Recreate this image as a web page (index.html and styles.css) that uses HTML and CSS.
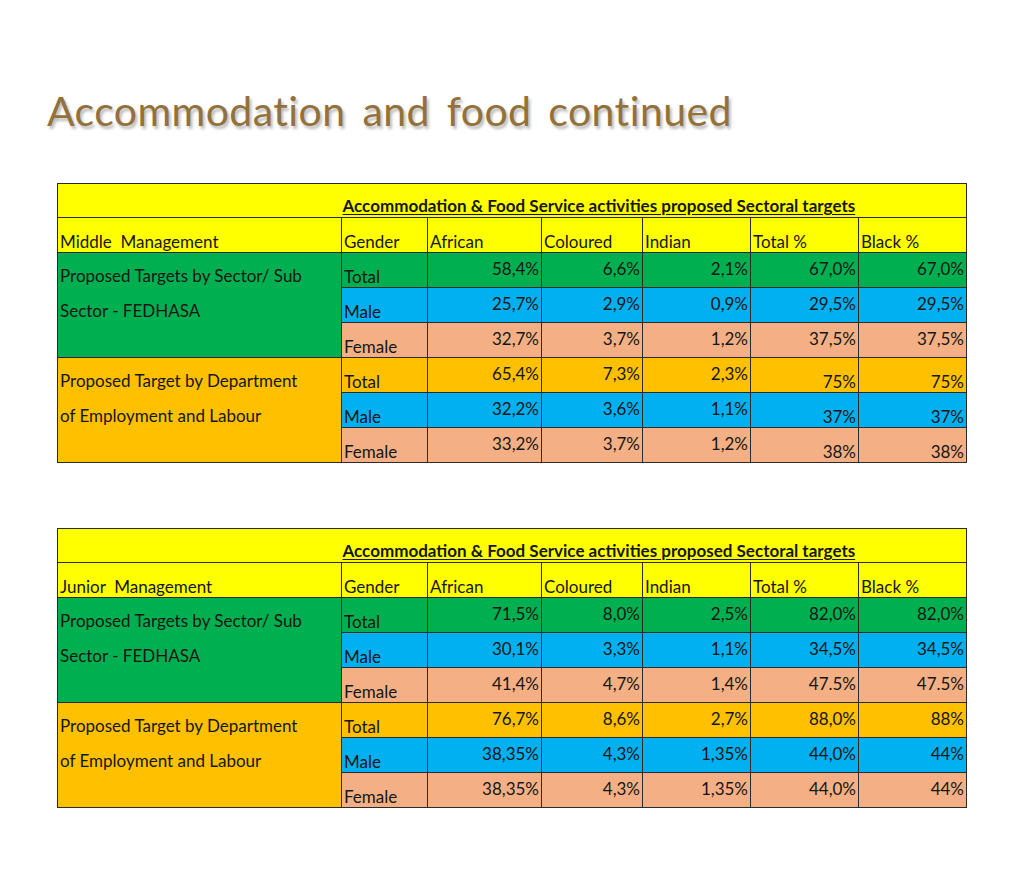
FILE: index.html
```html
<!DOCTYPE html>
<html>
<head>
<meta charset="utf-8">
<link rel="stylesheet" href="styles.css">
</head>
<body>
<div class="slide">
  <h1 class="title">Accommodation and food continued</h1>

  <table class="targets">
    <colgroup>
      <col class="c-label"><col class="c-gender"><col class="c-african"><col class="c-coloured"><col class="c-indian"><col class="c-total"><col class="c-black">
    </colgroup>
    <tr class="r-title">
      <td class="t-blank"></td>
      <td class="t-text" colspan="6">Accommodation &amp; Food Service activities proposed Sectoral targets</td>
    </tr>
    <tr class="r-head">
      <td class="lbl">Middle&nbsp; Management</td>
      <td class="lbl">Gender</td>
      <td class="lbl">African</td>
      <td class="lbl">Coloured</td>
      <td class="lbl">Indian</td>
      <td class="lbl">Total %</td>
      <td class="lbl">Black %</td>
    </tr>
    <tr class="green">
      <td class="group" rowspan="3">Proposed Targets by Sector/ Sub<br>Sector - FEDHASA</td>
      <td class="lbl">Total</td><td class="num">58,4%</td><td class="num">6,6%</td><td class="num">2,1%</td><td class="num">67,0%</td><td class="num">67,0%</td>
    </tr>
    <tr class="blue">
      <td class="lbl">Male</td><td class="num">25,7%</td><td class="num">2,9%</td><td class="num">0,9%</td><td class="num">29,5%</td><td class="num">29,5%</td>
    </tr>
    <tr class="salmon">
      <td class="lbl">Female</td><td class="num">32,7%</td><td class="num">3,7%</td><td class="num">1,2%</td><td class="num">37,5%</td><td class="num">37,5%</td>
    </tr>
    <tr class="orange">
      <td class="group" rowspan="3">Proposed Target by Department<br>of Employment and Labour</td>
      <td class="lbl">Total</td><td class="num">65,4%</td><td class="num">7,3%</td><td class="num">2,3%</td><td class="num lo">75%</td><td class="num lo">75%</td>
    </tr>
    <tr class="blue">
      <td class="lbl">Male</td><td class="num">32,2%</td><td class="num">3,6%</td><td class="num">1,1%</td><td class="num lo">37%</td><td class="num lo">37%</td>
    </tr>
    <tr class="salmon">
      <td class="lbl">Female</td><td class="num">33,2%</td><td class="num">3,7%</td><td class="num">1,2%</td><td class="num lo">38%</td><td class="num lo">38%</td>
    </tr>
  </table>

  <table class="targets second">
    <colgroup>
      <col class="c-label"><col class="c-gender"><col class="c-african"><col class="c-coloured"><col class="c-indian"><col class="c-total"><col class="c-black">
    </colgroup>
    <tr class="r-title">
      <td class="t-blank"></td>
      <td class="t-text" colspan="6">Accommodation &amp; Food Service activities proposed Sectoral targets</td>
    </tr>
    <tr class="r-head">
      <td class="lbl">Junior&nbsp; Management</td>
      <td class="lbl">Gender</td>
      <td class="lbl">African</td>
      <td class="lbl">Coloured</td>
      <td class="lbl">Indian</td>
      <td class="lbl">Total %</td>
      <td class="lbl">Black %</td>
    </tr>
    <tr class="green">
      <td class="group" rowspan="3">Proposed Targets by Sector/ Sub<br>Sector - FEDHASA</td>
      <td class="lbl">Total</td><td class="num">71,5%</td><td class="num">8,0%</td><td class="num">2,5%</td><td class="num">82,0%</td><td class="num">82,0%</td>
    </tr>
    <tr class="blue">
      <td class="lbl">Male</td><td class="num">30,1%</td><td class="num">3,3%</td><td class="num">1,1%</td><td class="num">34,5%</td><td class="num">34,5%</td>
    </tr>
    <tr class="salmon">
      <td class="lbl">Female</td><td class="num">41,4%</td><td class="num">4,7%</td><td class="num">1,4%</td><td class="num">47.5%</td><td class="num">47.5%</td>
    </tr>
    <tr class="orange">
      <td class="group" rowspan="3">Proposed Target by Department<br>of Employment and Labour</td>
      <td class="lbl">Total</td><td class="num">76,7%</td><td class="num">8,6%</td><td class="num">2,7%</td><td class="num">88,0%</td><td class="num">88%</td>
    </tr>
    <tr class="blue">
      <td class="lbl">Male</td><td class="num">38,35%</td><td class="num">4,3%</td><td class="num">1,35%</td><td class="num">44,0%</td><td class="num">44%</td>
    </tr>
    <tr class="salmon">
      <td class="lbl">Female</td><td class="num">38,35%</td><td class="num">4,3%</td><td class="num">1,35%</td><td class="num">44,0%</td><td class="num">44%</td>
    </tr>
  </table>
</div>
</body>
</html>
```

FILE: styles.css
```css
html, body {
  margin: 0;
  padding: 0;
  background: #ffffff;
}

.slide {
  width: 1024px;
  height: 890px;
  box-sizing: border-box;
  padding-top: 84px;
  font-family: "Lato", "Open Sans", sans-serif;
}

.title {
  margin: 0 0 0 47px;
  font-family: "Lato", "Open Sans", sans-serif;
  font-weight: 400;
  font-size: 41px;
  letter-spacing: 0.4px;
  word-spacing: 6px;
  line-height: 54px;
  color: #93713a;
  text-shadow: 2px 3px 3px rgba(0, 0, 0, 0.28);
}

.targets {
  margin: 45px 0 0 57px;
  border-collapse: collapse;
  table-layout: fixed;
  width: 909px;
  font-size: 17px;
  color: #161616;
}

.targets.second {
  margin-top: 65px;
}

.c-label { width: 284px; }
.c-gender { width: 86px; }
.c-african { width: 114px; }
.c-coloured { width: 101px; }
.c-indian { width: 108px; }
.c-total { width: 108px; }
.c-black { width: 108px; }

.targets td {
  border: 1px solid #2b2b2b;
  padding: 0 2px;
  height: 34px;
  box-sizing: border-box;
  overflow: hidden;
  white-space: nowrap;
}

.r-title td {
  background: #ffff00;
  height: 34px;
  vertical-align: bottom;
  padding-bottom: 1px;
  line-height: 20px;
}

.t-blank {
  border-right-style: hidden !important;
}

.t-text {
  font-weight: 700;
  text-decoration: underline;
  text-underline-offset: 2px;
  padding-left: 1px !important;
}

.r-head td {
  background: #ffff00;
  height: 35px;
}

.targets tr:not(.r-title):not(.r-head) td {
  height: 35px;
}

.lbl {
  vertical-align: bottom;
  padding-bottom: 0 !important;
  line-height: 20px;
}

.num {
  text-align: right;
  vertical-align: middle;
  padding-bottom: 3px !important;
  line-height: 20px;
}

.num.lo {
  vertical-align: bottom;
  padding-bottom: 0 !important;
}

.group {
  vertical-align: top;
  line-height: 35px;
  padding-top: 5px !important;
  white-space: nowrap;
}

.green td { background: #00b050; }
.blue td { background: #00b0f0; }
.salmon td { background: #f4b084; }
.orange td { background: #ffc000; }
```
